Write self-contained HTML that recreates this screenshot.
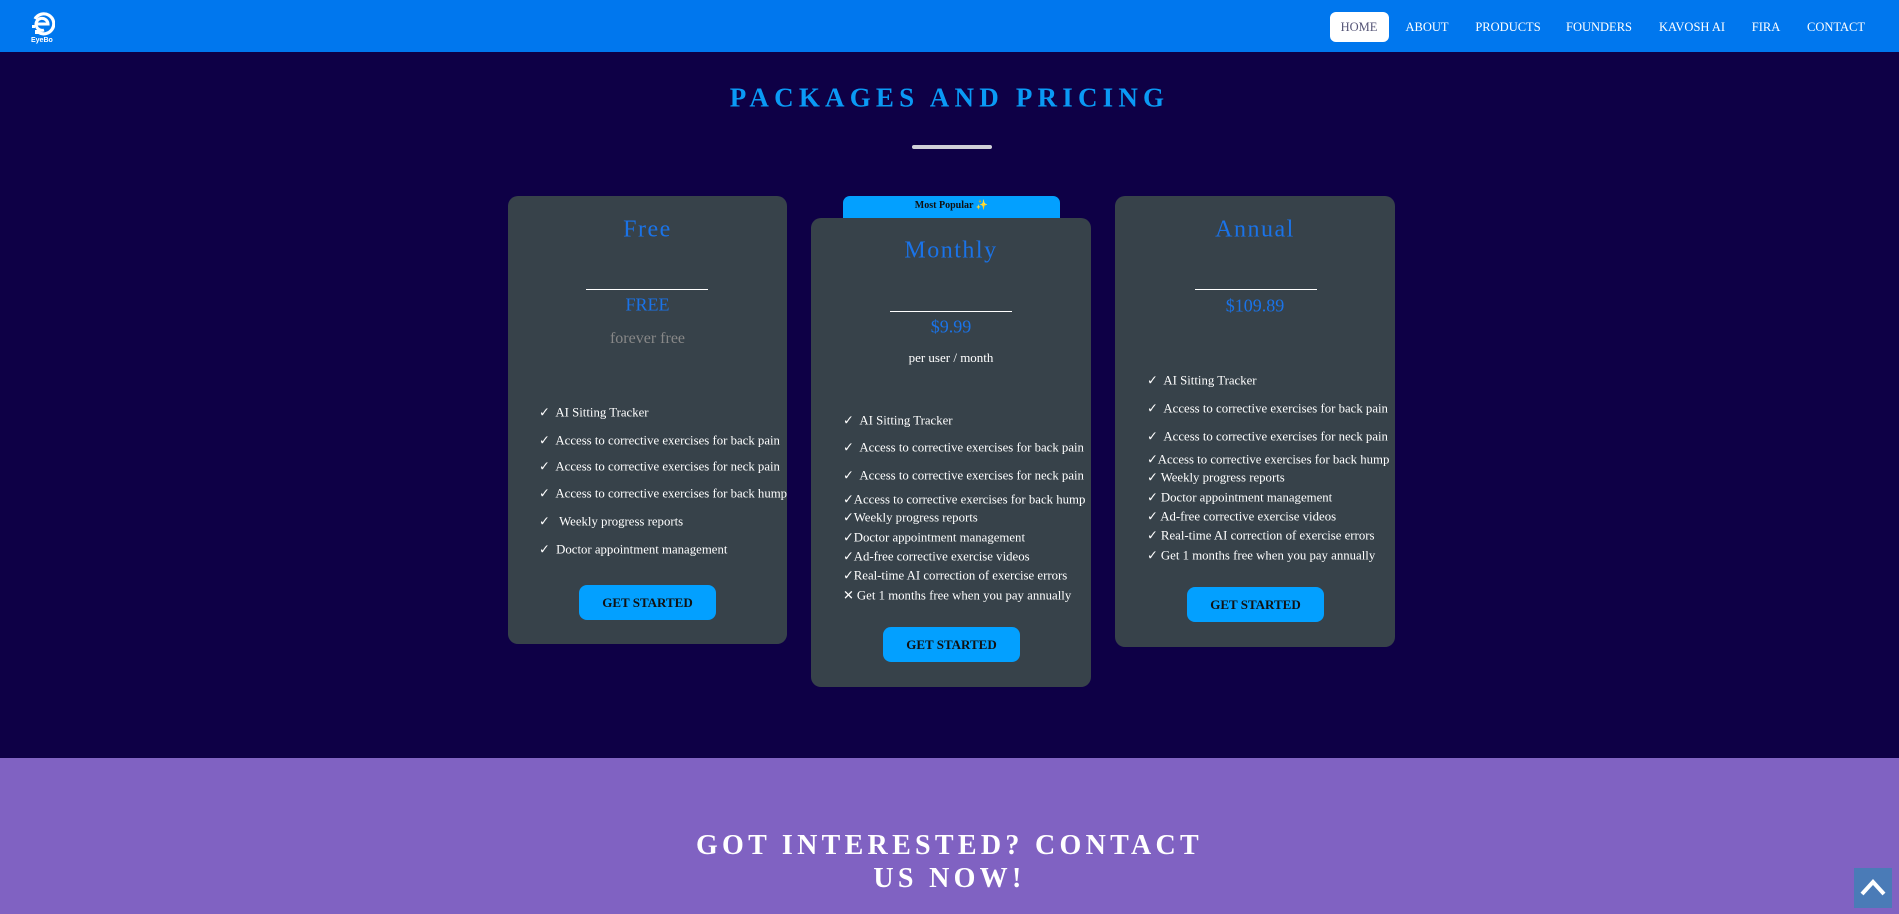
<!DOCTYPE html>
<html><head><meta charset="utf-8"><style>
*{margin:0;padding:0;box-sizing:border-box}
body{width:1899px;height:914px;overflow:hidden;background:#0e0046;font-family:"Liberation Serif",serif;position:relative}
.a{position:absolute}
nav{position:absolute;left:0;top:0;width:1899px;height:52px;background:#0077ee}
.ni{position:absolute;top:20px;color:#fff;font-size:12.5px;transform:translateX(-50%);white-space:nowrap}
.card{position:absolute;background:#37424a;border-radius:10px}
.c{position:absolute;left:0;width:100%;text-align:center;transform:translateY(-50%)}
.t{color:#1a73e8;font-size:24px;letter-spacing:1.5px}
.p{color:#1a73e8;font-size:18px}
.ln{position:absolute;height:1px;background:#fff;width:122px}
.f{position:absolute;color:#fff;font-size:12.8px;white-space:nowrap;transform:translateY(-50%)}
.btn{position:absolute;width:137px;height:35px;background:#03a0ff;border-radius:8px;color:#111;font-size:13px;font-weight:bold;text-align:center;line-height:35px}
</style></head><body>
<nav>
<svg class="a" style="left:29px;top:11px" width="26" height="26" viewBox="0 0 26 26"><path d="M6 8 A10 10 0 1 1 9 21" fill="none" stroke="#fff" stroke-width="3.2"/><path d="M8 13 H19 A6 6 0 1 0 15 19" fill="none" stroke="#fff" stroke-width="3"/><rect x="3" y="14" width="3" height="3" fill="#fff"/><rect x="6" y="19" width="4" height="4" fill="#fff"/></svg>
<div class="a" style="left:31px;top:37px;color:#fff;font:bold 7px 'Liberation Sans',sans-serif">EyeBo</div>
<div class="a" style="left:1330px;top:12px;width:59px;height:30px;background:#fff;border-radius:6px"></div>
<div class="ni" style="left:1359px;color:#557">HOME</div>
<div class="ni" style="left:1427px">ABOUT</div>
<div class="ni" style="left:1508px">PRODUCTS</div>
<div class="ni" style="left:1599px">FOUNDERS</div>
<div class="ni" style="left:1692px">KAVOSH AI</div>
<div class="ni" style="left:1766px">FIRA</div>
<div class="ni" style="left:1836px">CONTACT</div>
</nav>
<div class="c" style="top:98px;color:#0a9af5;font-size:27px;font-weight:bold;letter-spacing:5.2px">PACKAGES AND PRICING</div>
<div class="a" style="left:912px;top:145px;width:80px;height:4px;background:#d0d0d8;border-radius:2px"></div>

<div class="card" style="left:508px;top:196px;width:279px;height:448px">
<div class="c t" style="top:34px">Free</div>
<div class="ln" style="left:78px;top:93px"></div>
<div class="c p" style="top:109px">FREE</div>
<div class="c" style="top:143px;color:#888;font-size:16px">forever free</div>
<div class="f" style="left:31px;top:217px">✓&nbsp; AI Sitting Tracker</div>
<div class="f" style="left:31px;top:245px">✓&nbsp; Access to corrective exercises for back pain</div>
<div class="f" style="left:31px;top:271px">✓&nbsp; Access to corrective exercises for neck pain</div>
<div class="f" style="left:31px;top:298px">✓&nbsp; Access to corrective exercises for back hump</div>
<div class="f" style="left:31px;top:326px">✓&nbsp;&nbsp; Weekly progress reports</div>
<div class="f" style="left:31px;top:354px">✓&nbsp; Doctor appointment management</div>
<div class="btn" style="left:71px;top:389px">GET STARTED</div>
</div>

<div class="a" style="left:843px;top:196px;width:217px;height:26px;background:#03a0ff;border-radius:7px 7px 0 0;text-align:center;font-size:10px;font-weight:bold;color:#111;line-height:20px">Most Popular ✨</div>
<div class="card" style="left:811px;top:218px;width:280px;height:469px">
<div class="c t" style="top:33px">Monthly</div>
<div class="ln" style="left:79px;top:93px"></div>
<div class="c p" style="top:109px">$9.99</div>
<div class="c" style="top:140px;color:#fff;font-size:13px">per user / month</div>
<div class="f" style="left:32px;top:203px">✓&nbsp; AI Sitting Tracker</div>
<div class="f" style="left:32px;top:230px">✓&nbsp; Access to corrective exercises for back pain</div>
<div class="f" style="left:32px;top:258px">✓&nbsp; Access to corrective exercises for neck pain</div>
<div class="f" style="left:32px;top:282px">✓Access to corrective exercises for back hump</div>
<div class="f" style="left:32px;top:300px">✓Weekly progress reports</div>
<div class="f" style="left:32px;top:320px">✓Doctor appointment management</div>
<div class="f" style="left:32px;top:339px">✓Ad-free corrective exercise videos</div>
<div class="f" style="left:32px;top:358px">✓Real-time AI correction of exercise errors</div>
<div class="f" style="left:32px;top:378px">✕ Get 1 months free when you pay annually</div>
<div class="btn" style="left:72px;top:409px">GET STARTED</div>
</div>

<div class="card" style="left:1115px;top:196px;width:280px;height:451px">
<div class="c t" style="top:34px">Annual</div>
<div class="ln" style="left:80px;top:93px"></div>
<div class="c p" style="top:110px">$109.89</div>
<div class="f" style="left:32px;top:185px">✓&nbsp; AI Sitting Tracker</div>
<div class="f" style="left:32px;top:213px">✓&nbsp; Access to corrective exercises for back pain</div>
<div class="f" style="left:32px;top:241px">✓&nbsp; Access to corrective exercises for neck pain</div>
<div class="f" style="left:32px;top:264px">✓Access to corrective exercises for back hump</div>
<div class="f" style="left:32px;top:282px">✓ Weekly progress reports</div>
<div class="f" style="left:32px;top:302px">✓ Doctor appointment management</div>
<div class="f" style="left:32px;top:321px">✓ Ad-free corrective exercise videos</div>
<div class="f" style="left:32px;top:340px">✓ Real-time AI correction of exercise errors</div>
<div class="f" style="left:32px;top:360px">✓ Get 1 months free when you pay annually</div>
<div class="btn" style="left:72px;top:391px">GET STARTED</div>
</div>

<div class="a" style="left:0;top:758px;width:1899px;height:156px;background:#8062c2"></div>
<div class="c" style="top:846px;color:#fff;font-size:28px;font-weight:bold;letter-spacing:4.3px">GOT INTERESTED? CONTACT</div>
<div class="c" style="top:879px;color:#fff;font-size:28px;font-weight:bold;letter-spacing:4.3px">US NOW!</div>
<div class="a" style="left:1854px;top:868px;width:38px;height:40px;background:#4a7bb7"></div>
<svg class="a" style="left:1854px;top:868px" width="38" height="40"><path d="M8 26 L19 14 L30 26" fill="none" stroke="#fff" stroke-width="4"/></svg>
</body></html>
